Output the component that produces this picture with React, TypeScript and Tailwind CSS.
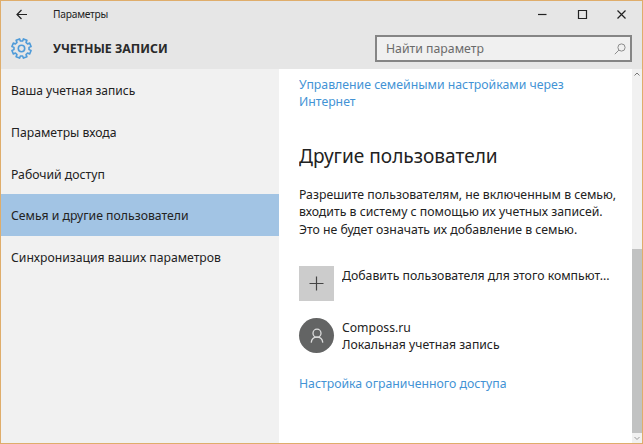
import React from "react";

const font = "font-['Noto_Sans','Open_Sans',sans-serif]";
// Slightly condensed text, anchored at its left edge.
const narrow = "inline-block origin-left scale-x-[0.944]";

// Eight-toothed cog outline: teeth sit between the compass directions.
function cogPath(cx: number, cy: number, outer: number, inner: number) {
  const points: string[] = [];
  const add = (angle: number, r: number) => {
    const a = (angle * Math.PI) / 180;
    points.push(`${(cx + r * Math.cos(a)).toFixed(2)} ${(cy + r * Math.sin(a)).toFixed(2)}`);
  };
  for (let i = 0; i < 8; i++) {
    const c = 22.5 + i * 45;
    add(c - 14, inner);
    add(c - 11, outer);
    add(c + 11, outer);
    add(c + 14, inner);
  }
  return `M${points.join("L")}Z`;
}

function Cog() {
  return (
    <svg className="h-[23px] w-[23px]" viewBox="0 0 23 23" fill="none" stroke="#4f9bd9" strokeWidth="1.6" strokeLinejoin="round">
      <path d={cogPath(11.5, 11.5, 9.8, 7.6)} />
      <circle cx="11.5" cy="11.5" r="3.2" />
    </svg>
  );
}

const items = [
  { label: "Ваша учетная запись", style: "scale-x-[0.925]" },
  { label: "Параметры входа", style: "scale-x-[0.94]" },
  { label: "Рабочий доступ", style: "scale-x-[0.94]" },
  { label: "Семья и другие пользователи", style: "scale-x-[0.942]", active: true },
  { label: "Синхронизация ваших параметров", style: "scale-x-[0.938]" },
];

export default function App() {
  return (
    <div className={`flex h-[444px] w-[643px] flex-col overflow-hidden border border-[#dfad6b] bg-white text-[13px] leading-[17.4px] whitespace-nowrap text-[#222] ${font}`}>
      <header className="h-[68px] shrink-0 bg-[#e6e6e6]">
        <div className="flex h-[26px] items-center">
          <svg className="ml-[15px] h-[11px] w-[12px]" viewBox="0 0 12 11" fill="none" stroke="#222" strokeWidth="1.2">
            <path d="M11 5.5H1M5.5 1L1 5.5L5.5 10" />
          </svg>
          <span className="ml-[25px] inline-block origin-left scale-x-[0.93] text-[11px] tracking-[-0.25px]">Параметры</span>
          <svg className="ml-auto h-[11px] w-[88px]" viewBox="0 0 88 11" fill="none" stroke="#222" strokeWidth="1.2">
            <path d="M0 5.5H8.5" />
            <path d="M40.5 1.5H48.5V9.5H40.5Z" />
            <path d="M79.5 1.5L87.5 9.5M87.5 1.5L79.5 9.5" />
          </svg>
          <div className="w-[16px]" />
        </div>
        <div className="flex h-[42px] items-start">
          <div className="ml-[9px] mt-[10px]"><Cog /></div>
          <h1 className="ml-[20px] mt-[13px] origin-left scale-x-[0.95] text-[13px] font-bold text-[#2a2a2a]">УЧЕТНЫЕ ЗАПИСИ</h1>
          <div className="ml-auto mr-[10.5px] mt-[8px] flex h-[27px] w-[256.5px] items-center border-2 border-[#858585] bg-[#f0f0f0] pl-[9px] pr-[4px] text-[#6a6a6a]">
            <span className={narrow}>Найти параметр</span>
            <svg className="ml-auto h-[12px] w-[12px]" viewBox="0 0 12 12" fill="none" stroke="#8c8c8c" strokeWidth="1">
              <circle cx="7.5" cy="4.5" r="3.6" />
              <path d="M4.9 7.1L0.8 11.2" />
            </svg>
          </div>
        </div>
      </header>
      <div className="flex min-h-0 flex-1">
        <nav className="w-[278px] shrink-0 bg-[#f1f1f1] pt-[0.4px]">
          {items.map((item) => (
            <div key={item.label} className={`flex h-[41.6px] items-center pl-[9.5px] pt-[2px] ${item.active ? "bg-[#a2c4e4]" : ""}`}>
              <span className={`inline-block origin-left ${item.style}`}>{item.label}</span>
            </div>
          ))}
        </nav>
        <main className="min-w-0 flex-1 pl-[20px] pt-[7px]">
          <a className={`${narrow} align-top text-[#4393d5]`}>
            Управление семейными настройками через<br />Интернет
          </a>
          <h2 className="mt-[31px] origin-left scale-x-[0.953] text-[20px] leading-[28px]">Другие пользователи</h2>
          <p className="mt-[16px] origin-left scale-x-[0.944]">
            Разрешите пользователям, не включенным в семью,<br />
            входить в систему с помощью их учетных записей.<br />
            Это не будет означать их добавление в семью.
          </p>
          <div className="mt-[28px] flex h-[35px]">
            <div className="flex h-[35px] w-[35px] items-center justify-center bg-[#ccc]">
              <svg className="h-[15px] w-[15px]" viewBox="0 0 15 15" stroke="#444" strokeWidth="1.2">
                <path d="M.5 7.5H14.5M7.5.5V14.5" />
              </svg>
            </div>
            <span className={`ml-[8px] mt-[1px] ${narrow}`}>Добавить пользователя для этого компьют...</span>
          </div>
          <div className="mt-[17px] flex h-[35px]">
            <div className="flex h-[35px] w-[35px] items-center justify-center rounded-full bg-[#636464]">
              <svg className="h-[16px] w-[14px]" viewBox="0 0 14 16" fill="none" stroke="#dcdcdc" strokeWidth="1.3">
                <circle cx="7" cy="5.2" r="4" />
                <path d="M1.2 14.6C1.6 11.2 3.9 9.2 7 9.2S12.4 11.2 12.8 14.6" />
              </svg>
            </div>
            <div className="ml-[8px] mt-[1px] origin-left scale-x-[0.938]">
              <div>Composs.ru</div>
              <div>Локальная учетная запись</div>
            </div>
          </div>
          <a className={`mt-[22px] ${narrow} text-[#4393d5]`}>Настройка ограниченного доступа</a>
        </main>
        <div className="flex w-[10px] shrink-0 flex-col bg-[#f1f1f1]">
          <svg className="h-[10px] w-[10px]" viewBox="0 0 10 10" fill="none" stroke="#777" strokeWidth="1">
            <path d="M2.5 6.5L5 4L7.5 6.5" />
          </svg>
          <div className="mt-auto h-[184px] bg-[#c1c2c2]" />
          <svg className="h-[10px] w-[10px]" viewBox="0 0 10 10" fill="none" stroke="#999" strokeWidth="1">
            <path d="M2.5 4L5 6.5L7.5 4" />
          </svg>
        </div>
      </div>
    </div>
  );
}
